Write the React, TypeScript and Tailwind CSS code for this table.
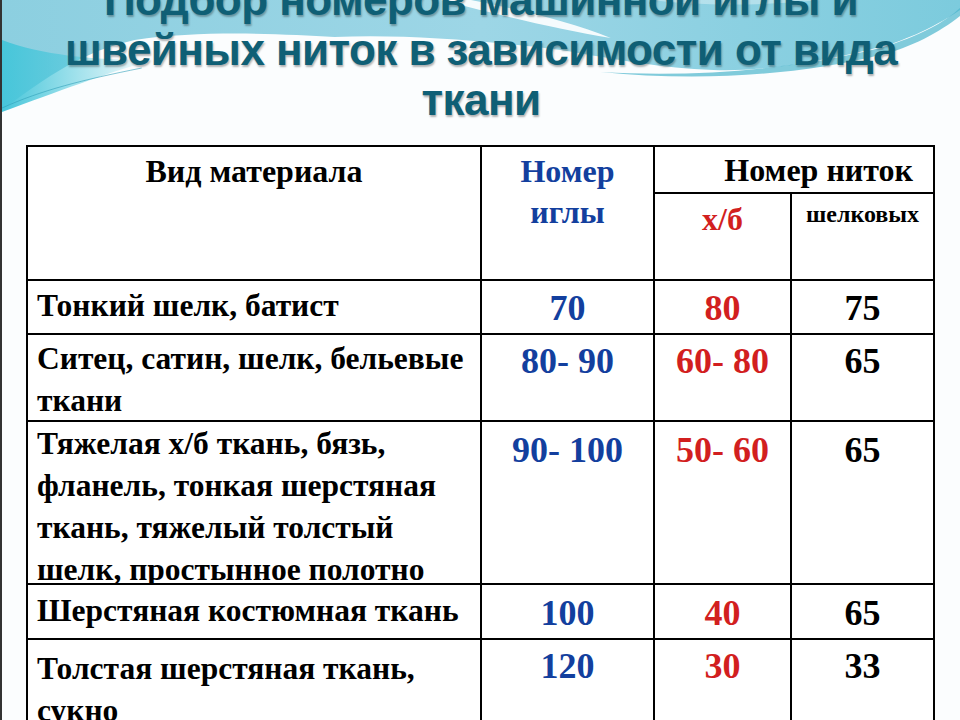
const rows = [
  { name: 'Тонкий шелк, батист', needle: '70', cotton: '80', silk: '75', h: 'pt-[4px]', n: 'pt-[6px]' },
  { name: 'Ситец, сатин, шелк, бельевые ткани', needle: '80- 90', cotton: '60- 80', silk: '65', h: 'pt-[3px]', n: 'pt-[5px]' },
  {
    name: 'Тяжелая х/б ткань, бязь, фланель, тонкая шерстяная ткань, тяжелый толстый шелк, простынное полотно',
    needle: '90- 100',
    cotton: '50- 60',
    silk: '65',
    h: 'pt-[1px]',
    n: 'pt-[7px]',
  },
  { name: 'Шерстяная костюмная ткань', needle: '100', cotton: '40', silk: '65', h: 'pt-[5px]', n: 'pt-[7px]' },
  { name: 'Толстая шерстяная ткань, сукно', needle: '120', cotton: '30', silk: '33', h: 'pt-[8px]', n: 'pt-[5px]' },
];

function Waves() {
  // slide background decoration
  return (
    <svg className="absolute inset-0 h-full w-full" viewBox="0 0 960 720" preserveAspectRatio="none">
      <defs>
        <linearGradient id="band" x1="0" y1="0" x2="1" y2="0">
          <stop offset="0" stopColor="#8ccfe0" />
          <stop offset="0.5" stopColor="#9dd6e6" />
          <stop offset="1" stopColor="#7ccbdd" />
        </linearGradient>
        <linearGradient id="cyan" x1="0" y1="0" x2="1" y2="0">
          <stop offset="0" stopColor="#47c6da" />
          <stop offset="1" stopColor="#47c6da" stopOpacity="0" />
        </linearGradient>
      </defs>
      <rect width="960" height="720" fill="#fbfdfe" />
      <path
        d="M0 0 H960 V10 C930 30 900 42 880 47 C820 62 760 72 713 70 C660 68 620 60 560 50 C480 40 400 34 333 37 C280 34 200 30 133 40 C90 50 60 65 0 110 Z"
        fill="url(#band)"
      />
      <path d="M0 40 C40 55 90 60 150 60 C100 75 60 90 0 112 Z" fill="url(#cyan)" />
      <path d="M0 108 C40 90 80 80 140 68" stroke="#2f9fb8" strokeWidth="1" fill="none" opacity="0.6" />
      <path
        d="M600 72 C700 78 800 68 880 48 C920 36 945 22 960 8 L960 16 C940 32 910 48 880 55 C800 75 700 82 600 72 Z"
        fill="#4bb5cc"
        opacity="0.7"
      />
      <path d="M470 0 C520 10 570 22 610 38 C560 30 510 18 440 0 Z" fill="#ffffff" opacity="0.9" />
      <path d="M650 0 C700 6 760 6 820 0 Z" fill="#ffffff" opacity="0.35" />
    </svg>
  );
}

export default function App() {
  const cell = 'border-r-2 border-b-2 border-black';
  return (
    <main className="relative h-[720px] w-[960px] overflow-hidden border-l-2 border-[#333]">
      <Waves />

      <div className="relative">
        {/* TITLE */}
        <h1 className="mt-[-25px] text-center font-['Liberation_Sans_Narrow','Liberation_Sans',sans-serif] text-[44px] leading-[50px] font-bold tracking-[-0.55px] text-[#0f5f75] [text-shadow:1px_2px_2px_rgba(0,0,0,0.3)]">
          Подбор номеров машинной иглы и
          <br />
          швейных ниток в зависимости от вида
          <br />
          ткани
        </h1>

        {/* TABLE */}
        <div className="mt-[20px] ml-[24px] grid w-[909px] grid-cols-[454px_173px_137px_143px] grid-rows-[47px_87px_54px_87px_163px_55px_120px] border-t-2 border-l-2 border-black bg-white font-['Liberation_Serif',serif] text-[31.5px] leading-[42px] font-bold">
          <div className={`${cell} row-span-2 pt-[4px] text-center text-[32px] leading-[41px]`}>Вид материала</div>
          <div className={`${cell} row-span-2 pt-[4px] text-center text-[32px] text-[#133f9e] leading-[41px]`}>
            Номер
            <br />
            иглы
          </div>
          <div className={`${cell} col-span-2 pr-[20px] text-right text-[32px] leading-[46px]`}>Номер ниток</div>
          <div className={`${cell} pt-[4px] text-center text-[32px] text-[#d21f1f]`}>х/б</div>
          <div className={`${cell} pt-[4px] text-center text-[24px] leading-[32px]`}>шелковых</div>

          {rows.map((row, idx) => (
            <div key={idx} className="contents">
              <div className={`${cell} overflow-hidden pl-[9px] ${row.h}`}>{row.name}</div>
              <div className={`${cell} ${row.n} text-center text-[36px] text-[#133f9e]`}>{row.needle}</div>
              <div className={`${cell} ${row.n} text-center text-[36px] text-[#d21f1f]`}>{row.cotton}</div>
              <div className={`${cell} ${row.n} text-center text-[36px]`}>{row.silk}</div>
            </div>
          ))}
        </div>
      </div>
    </main>
  );
}
